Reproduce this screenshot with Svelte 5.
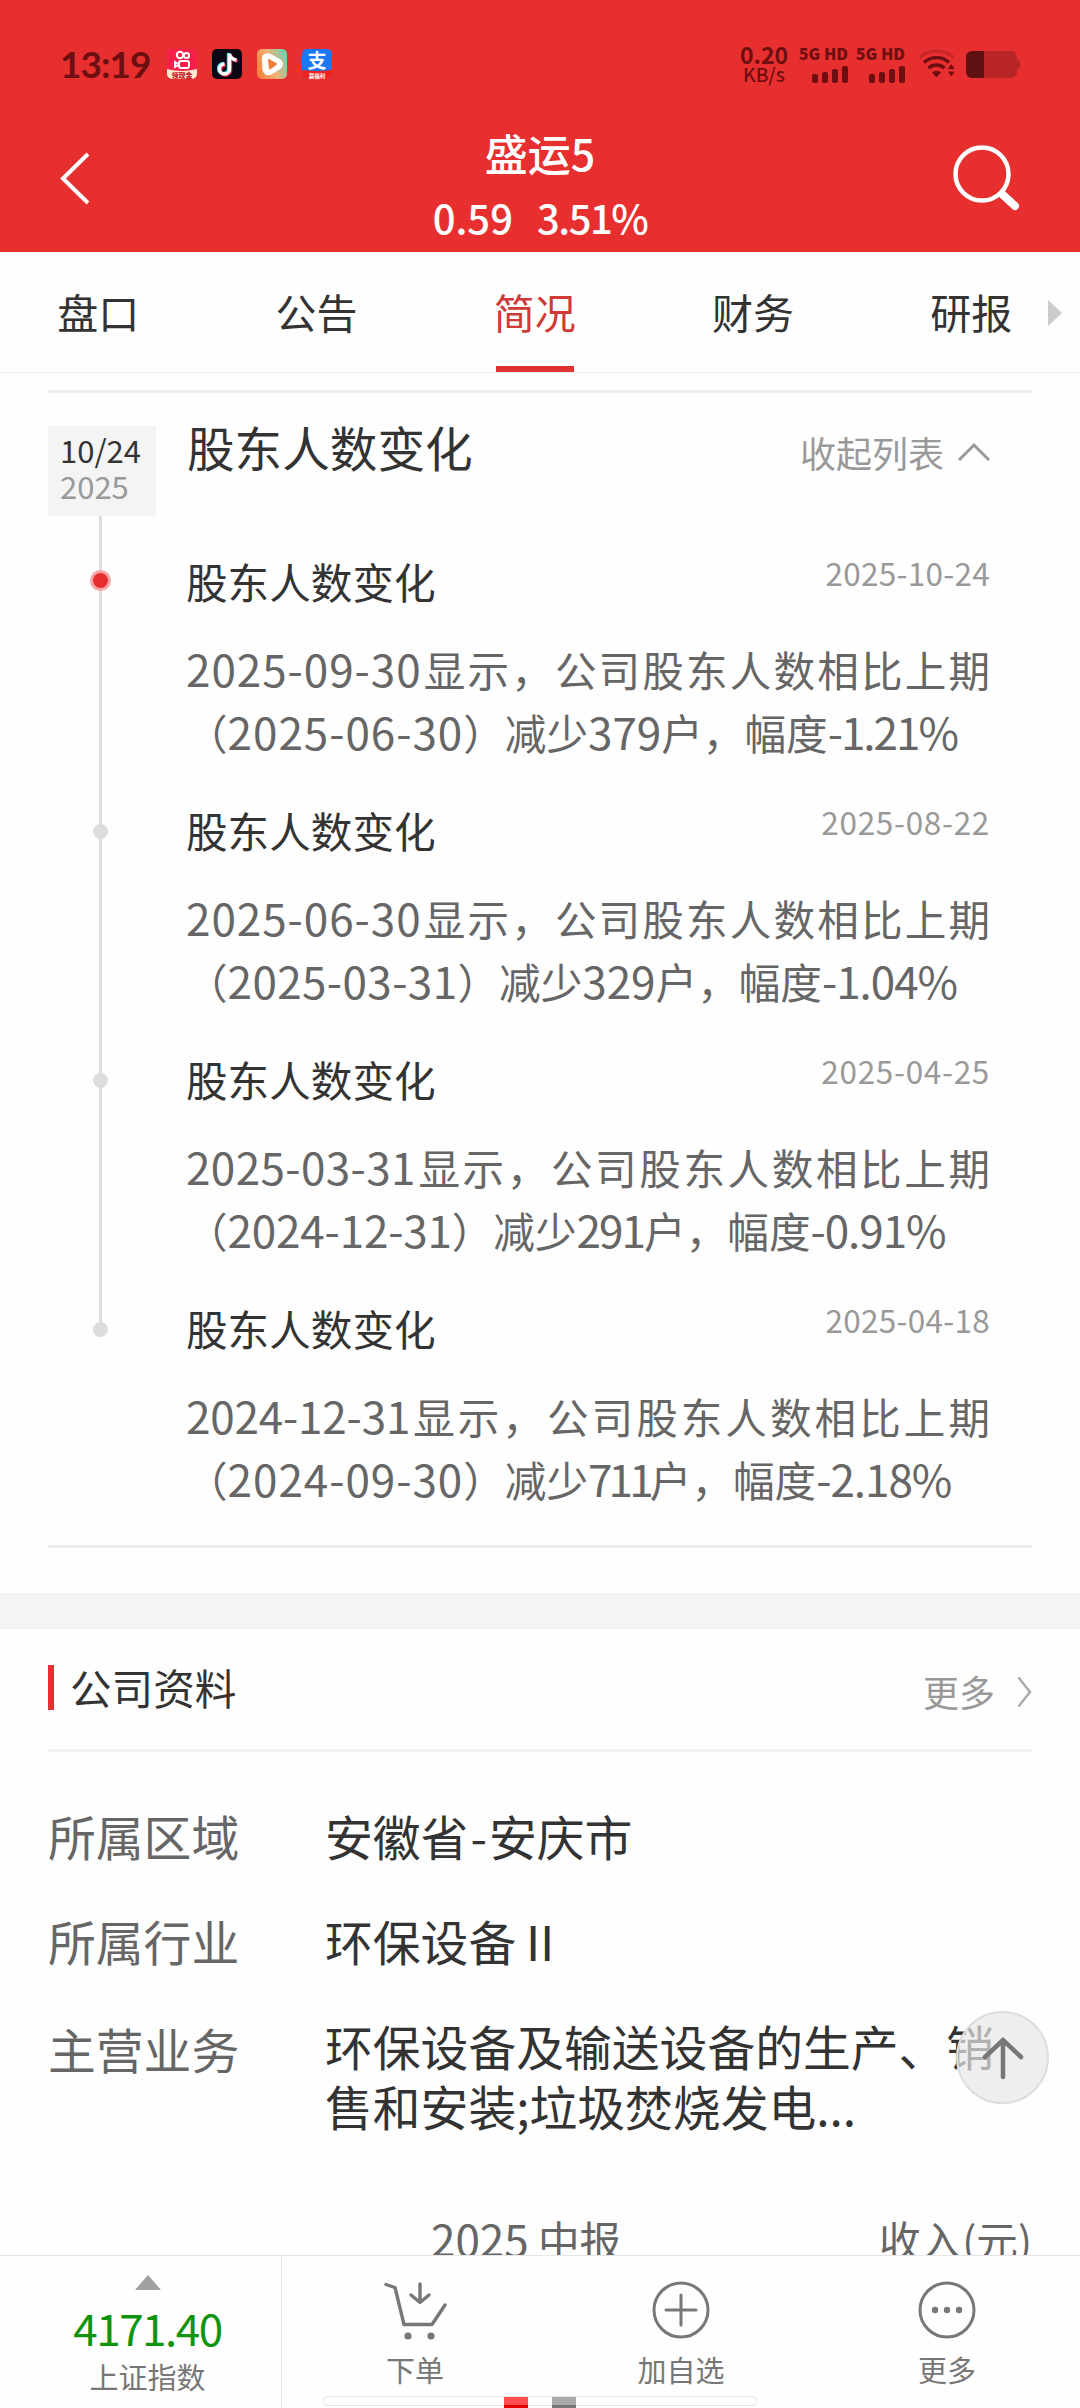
<script>
    // --- Data ---
    const tabs = ['盘口', '公告', '简况', '财务', '研报'];
    let activeTab = $state('简况');

    const changes = [
        { date: '2025-10-24', current: '2025-09-30', previous: '2025-06-30', count: '379', rate: '-1.21%' },
        { date: '2025-08-22', current: '2025-06-30', previous: '2025-03-31', count: '329', rate: '-1.04%' },
        { date: '2025-04-25', current: '2025-03-31', previous: '2024-12-31', count: '291', rate: '-0.91%' },
        { date: '2025-04-18', current: '2024-12-31', previous: '2024-09-30', count: '711', rate: '-2.18%' }
    ];

    const signalBars = [9, 11, 14, 17];

    // Narrow ones and percent signs, wide hyphens: spread the difference over the whole number
    const charAdjust = { '-': 0.11, '1': -0.13, '%': -0.12 };

    function spacing(text) {
        let total = 0;
        for (const ch of text) total += charAdjust[ch] ?? 0;
        return (total / text.length).toFixed(4);
    }
</script>

{#snippet num(text)}
    <span class="num" style="letter-spacing: {spacing(text)}em">{text}</span>
{/snippet}

{#snippet signal()}
    <div class="signal">
        <span class="signal-label">5G HD</span>
        <div class="bars">
            {#each signalBars as height}
                <i style="height: {height}px"></i>
            {/each}
        </div>
    </div>
{/snippet}

<div class="page">
    <header>
        <div class="status">
            <span class="time">13:19</span>
            <div class="apps">
                <svg viewBox="0 0 30 30">
                    <rect width="30" height="30" rx="5" fill="#f5204a" />
                    <path d="M0 20q15 4 30 0v5a5 5 0 0 1-5 5H5a5 5 0 0 1-5-5z" fill="#fde9cf" />
                    <g fill="none" stroke="#fff" stroke-width="2">
                        <circle cx="13" cy="6" r="3.2" />
                        <circle cx="19.5" cy="6.5" r="2.6" />
                        <rect x="12" y="12" width="10" height="7" rx="2" />
                        <path d="M11 15l-3-2v5l3-2" />
                    </g>
                    <text x="15" y="28.5" text-anchor="middle" font-size="7" font-weight="900" fill="#c0202a">领现金</text>
                </svg>
                <svg viewBox="0 0 30 30">
                    <rect width="30" height="30" rx="5" fill="#0b0613" />
                    <g fill="none" stroke-width="3.4">
                        <path d="M16.5 4v15.500a5 5 0 1 1-5-5M16.500 5q1 5 7 6" stroke="#2be5e5" />
                        <path d="M18.500 5.500v15.500a5 5 0 1 1-5-5M18.500 6q1 5 7 6" stroke="#f5274f" />
                        <path d="M17.500 4.500v15.500a5 5 0 1 1-5-5M17.500 5q1 5 7 6" stroke="#fff" />
                    </g>
                </svg>
                <svg viewBox="0 0 30 30">
                    <defs>
                        <linearGradient id="play" x1="0" y1="0.7" x2="1" y2="0.3">
                            <stop offset="0" stop-color="#f5813c" />
                            <stop offset="0.5" stop-color="#f0b277" />
                            <stop offset="1" stop-color="#6fd3ae" />
                        </linearGradient>
                    </defs>
                    <rect width="30" height="30" rx="5" fill="url(#play)" />
                    <path d="M9.500 10q0-2 2-1l9 5q2 1 0 2.500l-8 5q-2 1-2.500-1z" fill="#fff" stroke="#fff" stroke-width="9" stroke-linejoin="round" />
                    <path d="M12 11l7 4-6 4.500z" fill="#ef7f3a" stroke="#ef7f3a" stroke-width="2" stroke-linejoin="round" />
                </svg>
                <svg viewBox="0 0 30 30">
                    <rect width="30" height="30" rx="5" fill="#1a78f7" />
                    <path d="M0 21q15 2 30 0v4a5 5 0 0 1-5 5H5a5 5 0 0 1-5-5z" fill="#f0241d" />
                    <text x="15" y="18.500" text-anchor="middle" font-size="19" font-weight="700" fill="#fff">支</text>
                    <text x="15" y="28.500" text-anchor="middle" font-size="5.500" font-weight="700" fill="#fff">赢福利</text>
                </svg>
            </div>
            <div class="speed"><b>0.20</b><span>KB/s</span></div>
            {@render signal()}
            {@render signal()}
            <svg class="wifi" viewBox="0 0 38 30">
                <g fill="none" stroke="#6d0f10" stroke-width="3.400">
                    <path d="M1.500 8.500a25 25 0 0 1 34 0" opacity="0.250" />
                    <path d="M6 13.500a18.500 18.500 0 0 1 25 0" />
                    <path d="M10.500 19a12 12 0 0 1 16 0" />
                </g>
                <path d="M14 23.500q4.500-3.500 9 0L18.500 28.500z" fill="#6d0f10" />
                <path d="M30 20l3.300-5 3.300 5zM30 22.500l3.300 5 3.300-5z" fill="#6d0f10" />
            </svg>
            <div class="battery"><i></i></div>
            <i class="nub"></i>
        </div>
        <div class="titlebar">
            <button aria-label="返回">
                <svg width="34" height="56" viewBox="0 0 34 56"><path d="M30 4L5 28.500L30 53" fill="none" stroke="#fff" stroke-width="4" /></svg>
            </button>
            <div class="stock">
                <h1>盛运5</h1>
                <p><span>0.59</span><span class="rise">3.51%</span></p>
            </div>
            <button class="search" aria-label="搜索">
                <svg width="72" height="72" viewBox="0 0 72 72" fill="none" stroke="#fff">
                    <circle cx="32" cy="32" r="26.500" stroke-width="4.500" />
                    <path d="M52 52l13 12" stroke-width="8" stroke-linecap="round" />
                </svg>
            </button>
        </div>
    </header>

    <nav>
        {#each tabs as tab}
            <button class:active={tab === activeTab} onclick={() => (activeTab = tab)}>{tab}</button>
        {/each}
        <i class="next"></i>
    </nav>

    <main>
        <section class="events">
            <div class="events-head">
                <div class="day"><span>10/24</span><span class="year">2025</span></div>
                <h2>股东人数变化</h2>
                <button class="fold">
                    收起列表
                    <svg width="32" height="20" viewBox="0 0 32 20"><path d="M1 18L16 3L31 18" fill="none" stroke="#999" stroke-width="3" /></svg>
                </button>
            </div>
            <ul>
                {#each changes as item}
                    <li>
                        <div class="rail"><i></i></div>
                        <div class="event">
                            <div class="event-title">
                                <h3>股东人数变化</h3>
                                <time style="letter-spacing: {spacing(item.date)}em">{item.date}</time>
                            </div>
                            <p class="full">{@render num(item.current)}显示，公司股东人数相比上期</p>
                            <p>（{@render num(item.previous)}）减少{@render num(item.count)}户，幅度{@render num(item.rate)}</p>
                        </div>
                    </li>
                {/each}
            </ul>
        </section>

        <section class="company">
            <div class="company-head">
                <h2>公司资料</h2>
                <a href="#more">
                    更多
                    <svg width="15" height="32" viewBox="0 0 15 32"><path d="M1.500 1.500L13 16L1.500 30.500" fill="none" stroke="#aaa" stroke-width="2.500" /></svg>
                </a>
            </div>
            <dl>
                <dt>所属区域</dt>
                <dd>安徽省<span class="dash">-</span>安庆市</dd>
                <dt>所属行业</dt>
                <dd>环保设备Ⅱ</dd>
                <dt class="business">主营业务</dt>
                <dd>环保设备及输送设备的生产、销售和安装;垃圾焚烧发电...</dd>
            </dl>
            <div class="report">
                <span><span class="num">2025</span> 中报</span>
                <span>收入(元)</span>
            </div>
        </section>
    </main>

    <button class="to-top" aria-label="回到顶部">
        <svg width="42" height="44" viewBox="0 0 42 44"><path d="M21 41V4M3 21L21 4L39 21" fill="none" stroke="#777" stroke-width="4.500" stroke-linecap="round" /></svg>
    </button>

    <footer>
        <div class="index">
            <i></i>
            <b>4171.40</b>
            <span>上证指数</span>
        </div>
        <button>
            <svg width="64" height="62" viewBox="0 0 64 62" fill="none" stroke="#777" stroke-width="3.400" stroke-linecap="round" stroke-linejoin="round">
                <path d="M3 4.500L12 7.500L21 44.500H49L62 25M37 4V22M28 15L37 22.500L46 15" />
                <circle cx="25" cy="56" r="3.600" fill="#777" stroke="none" />
                <circle cx="48" cy="56" r="3.600" fill="#777" stroke="none" />
            </svg>
            <span>下单</span>
        </button>
        <button>
            <svg width="64" height="62" viewBox="0 0 64 62" fill="none" stroke="#777" stroke-width="3" stroke-linecap="round">
                <circle cx="32" cy="30" r="27" />
                <path d="M17 30H47M32 15V45" />
            </svg>
            <span>加自选</span>
        </button>
        <button>
            <svg width="64" height="62" viewBox="0 0 64 62">
                <circle cx="32" cy="30" r="27" fill="none" stroke="#777" stroke-width="3" />
                <g fill="#777">
                    <circle cx="20" cy="30" r="3.200" />
                    <circle cx="32" cy="30" r="3.200" />
                    <circle cx="44" cy="30" r="3.200" />
                </g>
            </svg>
            <span>更多</span>
        </button>
        <div class="pager"><i></i><i></i></div>
    </footer>
</div>

<style>
    :global(body) {
        margin: 0;
        background: #fefefe;
        font-family: 'Noto Sans CJK SC', sans-serif;
    }

    .page {
        position: relative;
        display: flex;
        flex-direction: column;
        width: 1080px;
        height: 2408px;
        overflow: hidden;
        background: #fefefe;
        color: #333;
    }

    h1, h2, h3, p, ul, dl, dd {
        margin: 0;
        padding: 0;
        font-weight: 400;
    }

    button {
        padding: 0;
        border: 0;
        background: none;
        font: inherit;
        color: inherit;
    }

    svg {
        display: block;
    }

    header {
        flex: none;
        height: 252px;
        background: #e72f2f;
    }

    /* --- Status bar --- */
    .status {
        display: flex;
        align-items: center;
        height: 128px;
        padding: 0 60px;
        color: #6d0f10;
    }

    .time {
        width: 107px;
        font-family: Lato, sans-serif;
        font-size: 37px;
        font-weight: 700;
        letter-spacing: -1px;
        line-height: 40px;
    }

    .apps {
        display: flex;
        gap: 15px;
        margin-right: auto;
    }

    .apps svg {
        width: 30px;
        height: 30px;
        overflow: visible;
    }

    .speed {
        display: flex;
        flex-direction: column;
        align-items: center;
        width: 50px;
        margin-right: 11px;
        font-size: 19px;
        font-weight: 500;
        line-height: 19px;
    }

    .speed b {
        font-size: 23px;
        font-weight: 700;
    }

    .signal {
        display: flex;
        flex-direction: column;
        align-items: flex-end;
        width: 48px;
        margin-right: 9px;
    }

    .signal-label {
        font-size: 16px;
        font-weight: 900;
        line-height: 15px;
        white-space: nowrap;
    }

    .bars {
        display: flex;
        align-items: flex-end;
        gap: 4px;
        height: 22px;
    }

    .bars i {
        width: 6px;
        border-radius: 2px;
        background: #6d0f10;
    }

    .wifi {
        width: 38px;
        height: 30px;
        margin: 0 10px 0 4px;
    }

    .battery {
        width: 51px;
        height: 27px;
        border-radius: 6px;
        background: #b82526;
        overflow: hidden;
    }

    .battery i {
        display: block;
        width: 18px;
        height: 100%;
        background: #5f1112;
    }

    .nub {
        width: 3px;
        height: 9px;
        border-radius: 0 2px 2px 0;
        background: #b82526;
    }

    .titlebar {
        display: grid;
        grid-template: 100px / 1fr auto 1fr;
        align-items: center;
        padding: 0 58px;
        color: #fff;
    }

    .stock {
        margin-top: 12px;
        text-align: center;
    }

    .search {
        justify-self: end;
    }

    h1 {
        font-size: 43px;
        font-weight: 500;
        line-height: 66px;
    }

    .stock p {
        display: flex;
        gap: 24px;
        font-size: 40px;
        font-weight: 500;
        line-height: 65px;
    }

    .rise {
        letter-spacing: -1.5px;
    }

    /* --- Tabs --- */
    nav {
        display: flex;
        flex: none;
        position: relative;
        height: 120px;
        margin-left: -11px;
        border-bottom: 1px solid #ececec;
        font-size: 41px;
    }

    nav button {
        flex: none;
        width: 218.300px;
        height: 120px;
        padding-bottom: 2px;
    }

    .active {
        color: #cf3a37;
        background: linear-gradient(#e03331, #e03331) center bottom / 78px 6px no-repeat;
    }

    .next {
        position: absolute;
        top: 48px;
        right: 18px;
        border: 13px solid transparent;
        border-left: 14px solid #ccc;
        border-right: 0;
    }

    main {
        flex: 1;
        min-height: 0;
        overflow: hidden;
        padding-top: 17px;
    }

    /* --- Shareholder events --- */
    .events {
        margin: 0 48px 45px;
        border-top: 3px solid #ededed;
        border-bottom: 3px solid #ededed;
        padding: 33px 42px 33px 0;
    }

    .events-head {
        display: flex;
        height: 90px;
    }

    .day {
        display: flex;
        flex-direction: column;
        box-sizing: border-box;
        width: 108px;
        padding: 6px 0 0 12px;
        margin-right: 31px;
        background: #f4f4f4;
        font-size: 31px;
        line-height: 36px;
    }

    .year {
        color: #999;
    }

    h2 {
        font-size: 47.600px;
        line-height: 42px;
    }

    .fold {
        display: flex;
        align-items: center;
        gap: 14px;
        height: 52px;
        margin-left: auto;
        color: #999;
        font-size: 36px;
    }

    ul {
        list-style: none;
    }

    li {
        display: flex;
        height: 249px;
    }

    .rail {
        position: relative;
        width: 3px;
        margin: 0 84px 0 51px;
        background: #ddd;
    }

    .rail i {
        position: absolute;
        top: 59px;
        left: -6px;
        width: 15px;
        height: 15px;
        border-radius: 50%;
        background: #ddd;
    }

    li:first-child .rail i {
        top: 57px;
        background: #e62e2e;
        box-shadow: 0 0 0 3px #f5a5a8;
    }

    li:last-child .rail {
        height: 66px;
    }

    .event {
        flex: 1;
        padding-top: 36px;
    }

    .event-title {
        display: flex;
        justify-content: space-between;
        height: 86px;
    }

    h3 {
        font-size: 41.600px;
        line-height: 58px;
    }

    time {
        color: #999;
        font-size: 31.500px;
        line-height: 41px;
    }

    .event p {
        height: 63px;
        color: #666;
        font-size: 41.600px;
        line-height: 63px;
        white-space: nowrap;
    }

    .event .full {
        text-align: justify;
        text-align-last: justify;
        white-space: normal;
    }

    .num {
        font-size: 44px;
        line-height: 1;
        white-space: nowrap;
    }

    /* --- Company profile --- */
    .company {
        border-top: 36px solid #f4f4f4;
        padding: 0 48px;
    }

    .company-head {
        display: flex;
        align-items: center;
        justify-content: space-between;
        height: 120px;
        border-bottom: 3px solid #f4f4f4;
    }

    .company-head h2 {
        padding-left: 16px;
        border-left: 6px solid #e03331;
        font-size: 41.600px;
        line-height: 45px;
        margin-bottom: 3px;
    }

    .company-head a {
        display: flex;
        align-items: center;
        gap: 22px;
        padding-top: 4px;
        color: #999;
        font-size: 36px;
        text-decoration: none;
    }

    .company-head svg {
        margin-top: 2px;
    }

    dl {
        display: grid;
        grid-template-columns: 277px 1fr;
        row-gap: 45px;
        padding-top: 54px;
        font-size: 47.800px;
        line-height: 60px;
    }

    dt {
        color: #666;
    }

    .business {
        padding-top: 3px;
    }

    .dash {
        padding: 0 2px;
    }

    .report {
        display: flex;
        justify-content: space-between;
        padding: 72px 0 0 383px;
        color: #666;
        font-size: 41.600px;
        line-height: 62px;
    }

    .to-top {
        position: absolute;
        top: 2011px;
        left: 956px;
        display: flex;
        align-items: center;
        justify-content: center;
        box-sizing: border-box;
        width: 93px;
        height: 93px;
        border: 2px solid #ddd;
        border-radius: 50%;
        background: rgba(231, 231, 231, 0.7);
    }

    /* --- Bottom bar --- */
    footer {
        position: relative;
        display: grid;
        grid-template-columns: 282px 1fr 1fr 1fr;
        flex: none;
        height: 152px;
        border-top: 1px solid #e6e6e6;
        color: #777;
        font-size: 29px;
        line-height: 34px;
    }

    .index {
        display: flex;
        flex-direction: column;
        align-items: center;
        box-sizing: border-box;
        padding: 19px 0 0 14px;
        border-right: 1px solid #e6e6e6;
    }

    .index i {
        border: 13px solid transparent;
        border-top: 0;
        border-bottom: 15px solid #a0a0a0;
    }

    .index b {
        margin: 12px 0 7px;
        color: #109410;
        font-size: 44px;
        font-weight: 400;
        letter-spacing: -1.5px;
        line-height: 50px;
    }

    footer button {
        display: flex;
        flex-direction: column;
        align-items: center;
        gap: 10px;
        padding-top: 24px;
    }

    .pager {
        position: absolute;
        left: 323px;
        bottom: 2px;
        display: flex;
        justify-content: center;
        gap: 24px;
        box-sizing: border-box;
        width: 434px;
        height: 10px;
        border: 1px solid #e2e2e2;
        border-radius: 5px;
        background: #fff;
    }

    .pager i {
        width: 24px;
        height: 11px;
        background: linear-gradient(#ff4d4d 8px, #e60000 8px);
    }

    .pager i + i {
        background: linear-gradient(#aaa 8px, #777 8px);
    }
</style>
